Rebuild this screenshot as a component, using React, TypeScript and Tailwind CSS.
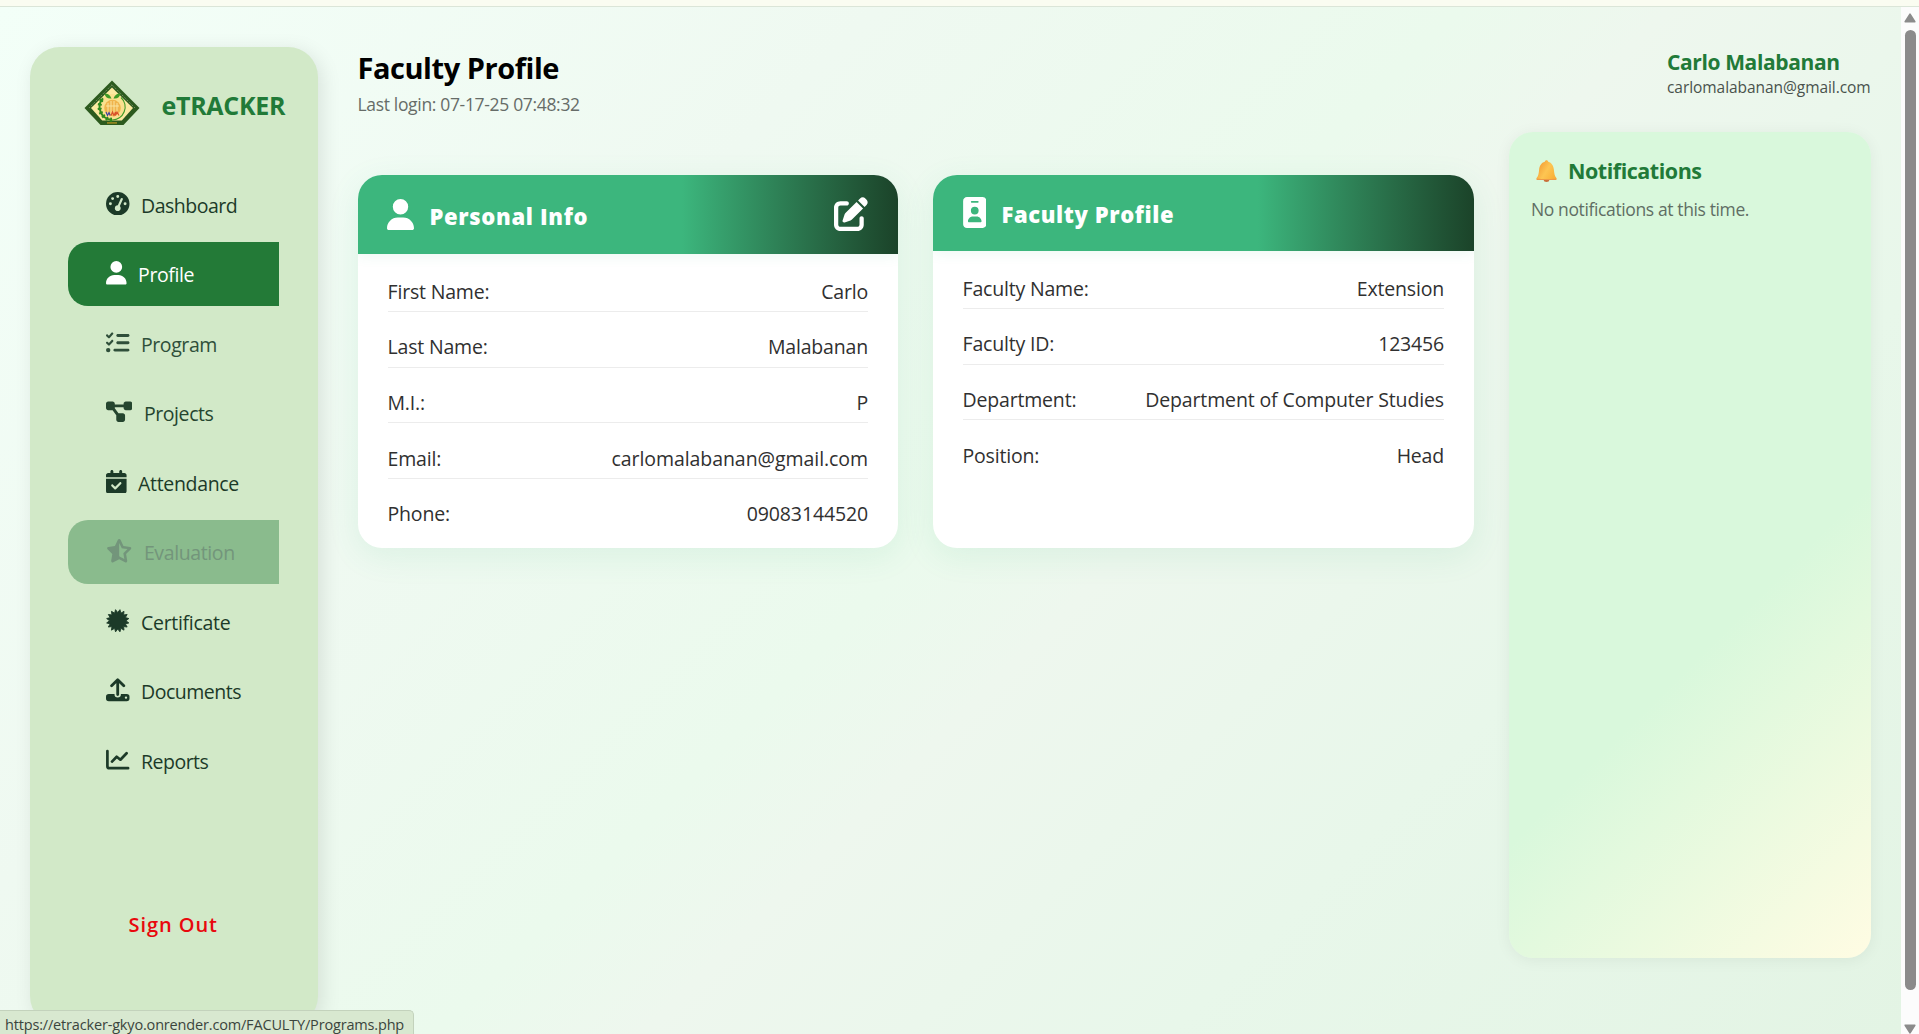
import type { ReactNode } from "react";
import {
  FaGaugeHigh,
  FaUser,
  FaListCheck,
  FaDiagramProject,
  FaCalendarCheck,
  FaStarHalfStroke,
  FaIdBadge,
  FaPenToSquare,
} from "react-icons/fa6";

const sealPoints = Array.from({ length: 32 }, (_, i) => {
  const angle = ((i + 1) * 11.25 * Math.PI) / 180;
  const r = i % 2 === 0 ? 11.3 : 8.2;
  return `${(11.75 + r * Math.sin(angle)).toFixed(2)},${(11.75 - r * Math.cos(angle)).toFixed(2)}`;
}).join(" ");

function SealIcon() {
  return (
    <svg viewBox="0 0 23.5 23.5" className="h-[23.5px] w-[23.5px]">
      <polygon points={sealPoints} fill="currentColor" stroke="currentColor" strokeWidth="0.9" strokeLinejoin="round" />
    </svg>
  );
}

function UploadIcon() {
  return (
    <svg viewBox="0 0 23.5 23.5" className="h-[23.5px] w-[23.5px]">
      <path
        fillRule="evenodd"
        fill="currentColor"
        d="M2.8 16h5.7v.2a3.2 3.2 0 0 0 6.4 0V16h5.8a2.8 2.8 0 0 1 2.8 2.8v1.7a2.8 2.8 0 0 1-2.8 2.8H2.8A2.8 2.8 0 0 1 0 20.5v-1.7A2.8 2.8 0 0 1 2.8 16zM20 18.4a1.2 1.2 0 1 0 0 2.4 1.2 1.2 0 0 0 0-2.4z"
      />
      <path
        d="M11.7 16.5V2M5.6 7.8l6.1-6.1 6.1 6.1"
        fill="none"
        stroke="currentColor"
        strokeWidth="2.8"
        strokeLinecap="round"
        strokeLinejoin="round"
      />
    </svg>
  );
}

function ChartIcon() {
  return (
    <svg viewBox="0 0 23.5 23.5" className="h-[23.5px] w-[23.5px]">
      <path
        d="M1.4 3v15.2a2 2 0 0 0 2 2h18.7M6 13.6l4.7-4.9 3.7 3 6.2-6.5"
        fill="none"
        stroke="currentColor"
        strokeWidth="2.7"
        strokeLinecap="round"
        strokeLinejoin="round"
      />
    </svg>
  );
}

function Logo() {
  return (
    <svg viewBox="0 0 56 46" className="h-[46px] w-[56px] shrink-0">
      <path d="M28 0.5 55.5 28 39.5 45H16.5L0.5 28z" fill="#2c5a1e" />
      <path d="M28 4.8 51 28M28 4.8 5 28" stroke="#7f9a70" strokeWidth="1" strokeDasharray="1.2 1.2" fill="none" />
      <path d="M28 7.5 49 28 37.8 40.5H18.2L7 28z" fill="#fbe9a0" />
      <rect x="23" y="42" width="10" height="1.8" fill="#8f8420" />
      <circle cx="28" cy="27" r="13" fill="#fae08f" />
      <path d="M28 39.8a12.8 12.8 0 0 1-9-21.5" fill="none" stroke="#2f8a1e" strokeWidth="2" />
      <path d="M28 39.8a12.8 12.8 0 0 1-9-21.5" fill="none" stroke="#2f8a1e" strokeWidth="4" strokeDasharray="2 2.2" />
      <path d="M37 17.500a13 13 0 0 1-9 22.500" fill="none" stroke="#3f9a26" strokeWidth="1.2" />
      <circle cx="28.500" cy="28" r="8.300" fill="#f0b44c" />
      <path d="M24 23v11M27 21v13M30 21v13M33 23v11M22 26h13" stroke="#fbe9a8" strokeWidth="0.9" />
      <path d="M27.500 18.500c-1.500-4-4-5-7-5 .5 3.500 3 5.500 7 5zM29.500 18.500c1.500-4 4-5 7-5-.5 3.500-3 5.500-7 5z" fill="#3f9a26" />
      <path d="M22 32l1.500 3.500 1.500-3 1.200 3" fill="none" stroke="#3a3fa8" strokeWidth="1.1" />
      <path d="M27 35.500l1.500-3.500L30 35.500l1.500-3.500v3.500l1.500-3.500 2 3.500" fill="none" stroke="#d8502a" strokeWidth="1.1" />
    </svg>
  );
}

function BellIcon() {
  return (
    <svg viewBox="0 0 21 22" className="h-[22px] w-[21px] shrink-0">
      <defs>
        <linearGradient id="bell" x1="0" y1="0" x2="1" y2="0.6">
          <stop offset="0" stopColor="#f08f2a" />
          <stop offset="0.6" stopColor="#fdc552" />
          <stop offset="1" stopColor="#f9b23c" />
        </linearGradient>
      </defs>
      <ellipse cx="10.5" cy="20.3" rx="2.8" ry="1.6" fill="#c9703a" />
      <path
        d="M10.5 0.300c.9 0 1.500.6 1.700 1.400 3.600 1 5.300 4.100 5.700 8 .3 3.700.8 6.200 2.200 7.900.7.900.6 2.400-.6 2.400H1.500c-1.200 0-1.300-1.500-.6-2.400 1.400-1.700 1.900-4.200 2.200-7.900.4-3.900 2.100-7 5.700-8 .2-.8.800-1.400 1.700-1.400z"
        fill="url(#bell)"
      />
      <path d="M0.6 18.400c6 .9 13.600.9 19.800 0 .1.900-.2 1.600-.9 1.600H1.500c-.7 0-1-.7-.9-1.600z" fill="#ee9a48" />
    </svg>
  );
}

type NavItem = { label: string; icon: ReactNode; style: string };

const idle = "text-[#1c3a28]";
const navItems: NavItem[] = [
  { label: "Dashboard", icon: <FaGaugeHigh className="h-[23.5px] w-[23.5px]" />, style: `${idle} tracking-[-0.5px]` },
  {
    label: "Profile",
    icon: <FaUser className="h-[23.5px] w-[20.6px]" />,
    style: "rounded-l-[20px] bg-[#237a37] font-medium text-white tracking-[-0.4px]",
  },
  { label: "Program", icon: <FaListCheck className="h-[23.5px] w-[23.5px]" />, style: "text-[#2f4f3a] tracking-[-0.42px]" },
  { label: "Projects", icon: <FaDiagramProject className="h-[23.5px] w-[26.4px]" />, style: "text-[#25452f] tracking-[-0.41px]" },
  { label: "Attendance", icon: <FaCalendarCheck className="h-[23.5px] w-[20.6px]" />, style: `${idle} tracking-[-0.33px]` },
  {
    label: "Evaluation",
    icon: <FaStarHalfStroke className="h-[23.5px] w-[26.4px]" />,
    style: "rounded-l-[20px] bg-[#8abb8d] text-[#73957b] tracking-[-0.38px]",
  },
  { label: "Certificate", icon: <SealIcon />, style: `${idle} tracking-[-0.3px]` },
  { label: "Documents", icon: <UploadIcon />, style: `${idle} tracking-[-0.49px]` },
  { label: "Reports", icon: <ChartIcon />, style: `${idle} tracking-[-0.5px]` },
];

function Sidebar() {
  return (
    <aside className="ml-[30px] mt-10 flex h-[979px] w-72 shrink-0 flex-col rounded-[30px] bg-[#d2e9c8] shadow-[4px_4px_20px_rgba(0,0,0,0.1)]">
      <div className="flex items-center gap-[22px] pl-[53.5px] pt-[33px]">
        <Logo />
        <span className="pt-1 text-[25px] leading-[42px] font-bold tracking-[-0.3px] text-[#217a38]">eTRACKER</span>
      </div>
      <nav className="mt-[46.5px] ml-[38px] flex w-[211px] flex-col gap-[5.5px]">
        {navItems.map((item) => (
          <a key={item.label} className={`flex h-16 items-center gap-[11.5px] pl-[38px] text-[19.5px] leading-7 ${item.style}`}>
            <span className="mb-[2px] shrink-0">{item.icon}</span>
            <span className="pt-[2px]">{item.label}</span>
          </a>
        ))}
      </nav>
      <a className="mt-[118px] pl-[98.5px] text-[20px] leading-7 font-semibold tracking-[0.93px] text-[#e8080d]">Sign Out</a>
    </aside>
  );
}

type Row = { label: string; value: string; tracking?: string };

function InfoCard({ header, rows, cardClass, headerClass }: { header: ReactNode; rows: Row[]; cardClass: string; headerClass: string }) {
  return (
    <section className={`h-[373px] overflow-hidden rounded-3xl bg-white shadow-[0_8px_32px_rgba(60,182,125,0.11)] ${cardClass}`}>
      <header
        className={`flex items-center bg-linear-to-r from-[#3cb67d] from-60% to-[#1b4329] text-white shadow-[0_2px_12px_rgba(60,182,125,0.1)] ${headerClass}`}
      >
        {header}
      </header>
      <div className="px-[30px] pt-[2.4px]">
        {rows.map((row) => (
          <div
            key={row.label}
            className="flex h-[55.6px] justify-between border-b border-[#ececec] pt-[20.5px] text-[19.5px] leading-[30px] tracking-[-0.18px] text-[#303030] last:border-0"
          >
            <span className="-ml-[0.5px]">{row.label}</span>
            <span className={row.tracking}>{row.value}</span>
          </div>
        ))}
      </div>
    </section>
  );
}

const personal: Row[] = [
  { label: "First Name:", value: "Carlo" },
  { label: "Last Name:", value: "Malabanan" },
  { label: "M.I.:", value: "P" },
  { label: "Email:", value: "carlomalabanan@gmail.com", tracking: "tracking-[-0.06px]" },
  { label: "Phone:", value: "09083144520", tracking: "tracking-[-0.13px]" },
];

const faculty: Row[] = [
  { label: "Faculty Name:", value: "Extension" },
  { label: "Faculty ID:", value: "123456" },
  { label: "Department:", value: "Department of Computer Studies", tracking: "tracking-[-0.13px]" },
  { label: "Position:", value: "Head" },
];

function Scrollbar() {
  return (
    <div className="flex w-[18px] shrink-0 flex-col items-center bg-[#fcfcfc] pt-[6px]">
      <svg viewBox="0 0 12 10" className="h-[10px] w-3">
        <path d="M6 1.2 10.8 8.8H1.2z" fill="#8b8b8b" stroke="#8b8b8b" strokeWidth="1.6" strokeLinejoin="round" />
      </svg>
      <div className="mt-[7px] h-[960px] w-[11px] rounded-full bg-[#8b8b8b]" />
      <svg viewBox="0 0 12 10" className="mt-[34px] h-[10px] w-3">
        <path d="M6 8.8 1.2 1.2h9.6z" fill="#8b8b8b" stroke="#8b8b8b" strokeWidth="1.6" strokeLinejoin="round" />
      </svg>
    </div>
  );
}

export default function App() {
  return (
    <div className="relative flex h-[1034px] flex-col overflow-hidden font-['Open_Sans','Noto_Sans',sans-serif]">
      <div className="h-[7px] shrink-0 border-b border-[#dbe5d8] bg-[#fafcf1]" />
      <div className="flex min-h-0 flex-1">
        <div className="flex min-w-0 flex-1 items-start bg-[linear-gradient(135deg,#f3fff8_0%,#eff9f1_30%,#ebfaed_50%,#eef7ee_57%,#e8f7ea_75%,#e3f4e4_100%)]">
          <Sidebar />
          <main className="ml-10 w-[1116px] pt-[41px]">
            <h1 className="-ml-[0.5px] text-[29px] leading-10 font-bold tracking-[-0.45px] text-black">Faculty Profile</h1>
            <p className="-ml-[0.5px] mt-[3px] text-[17.5px] leading-[26px] tracking-[-0.33px] text-[#666c68]">
              Last login: 07-17-25 07:48:32
            </p>
            <div className="mt-[58px] flex justify-between">
              <InfoCard
                rows={personal}
                cardClass="w-[540px]"
                headerClass="h-[79px] pr-[30px] pl-[29px]"
                header={
                  <>
                    <FaUser className="h-[31px] w-[27px]" />
                    <h2 className="ml-[15.5px] pt-0.5 text-[22px] leading-8 font-extrabold tracking-[0.66px]">Personal Info</h2>
                    <FaPenToSquare className="mb-px ml-auto h-[34px] w-[34px]" />
                  </>
                }
              />
              <InfoCard
                rows={faculty}
                cardClass="w-[541px]"
                headerClass="h-[76px] px-[29.5px]"
                header={
                  <>
                    <FaIdBadge className="mb-px h-[31px] w-[23.5px]" />
                    <h2 className="ml-[15.5px] pt-0.5 text-[22px] leading-8 font-extrabold tracking-[0.6px]">Faculty Profile</h2>
                  </>
                }
              />
            </div>
          </main>
          <div className="ml-[35px] w-[362px] pt-[41px]">
            <div className="pl-[158px]">
              <p className="text-[21px] leading-7 font-bold tracking-[-0.38px] text-[#217a38]">Carlo Malabanan</p>
              <p className="mt-px text-[15.5px] leading-5 tracking-[-0.06px] whitespace-nowrap text-[#49524c]">
                carlomalabanan@gmail.com
              </p>
            </div>
            <section className="mt-[35px] h-[826px] rounded-3xl bg-[linear-gradient(135deg,#d9f8dc_0%,#d9f8dc_60%,#fffce3_100%)] px-[22px] pt-[24.5px] shadow-[0_2px_16px_rgba(0,0,0,0.06)]">
              <h2 className="flex items-center gap-[11px] pl-[5px] text-[21.5px] leading-7 font-bold tracking-[-0.47px] text-[#217a38]">
                <BellIcon />
                Notifications
              </h2>
              <p className="mt-3 text-[17.5px] leading-6 tracking-[-0.38px] text-[#5f6e64]">No notifications at this time.</p>
            </section>
          </div>
        </div>
        <Scrollbar />
      </div>
      <div className="absolute bottom-0 left-0 h-6 w-[414px] rounded-tr-[5px] border-t border-r border-[#c3d2bc] bg-[#d8e8d0] pt-[2.5px] pl-[5px] text-[14.5px] leading-[22px] tracking-[-0.17px] whitespace-nowrap text-[#3b453d]">
        https://etracker-gkyo.onrender.com/FACULTY/Programs.php
      </div>
    </div>
  );
}
